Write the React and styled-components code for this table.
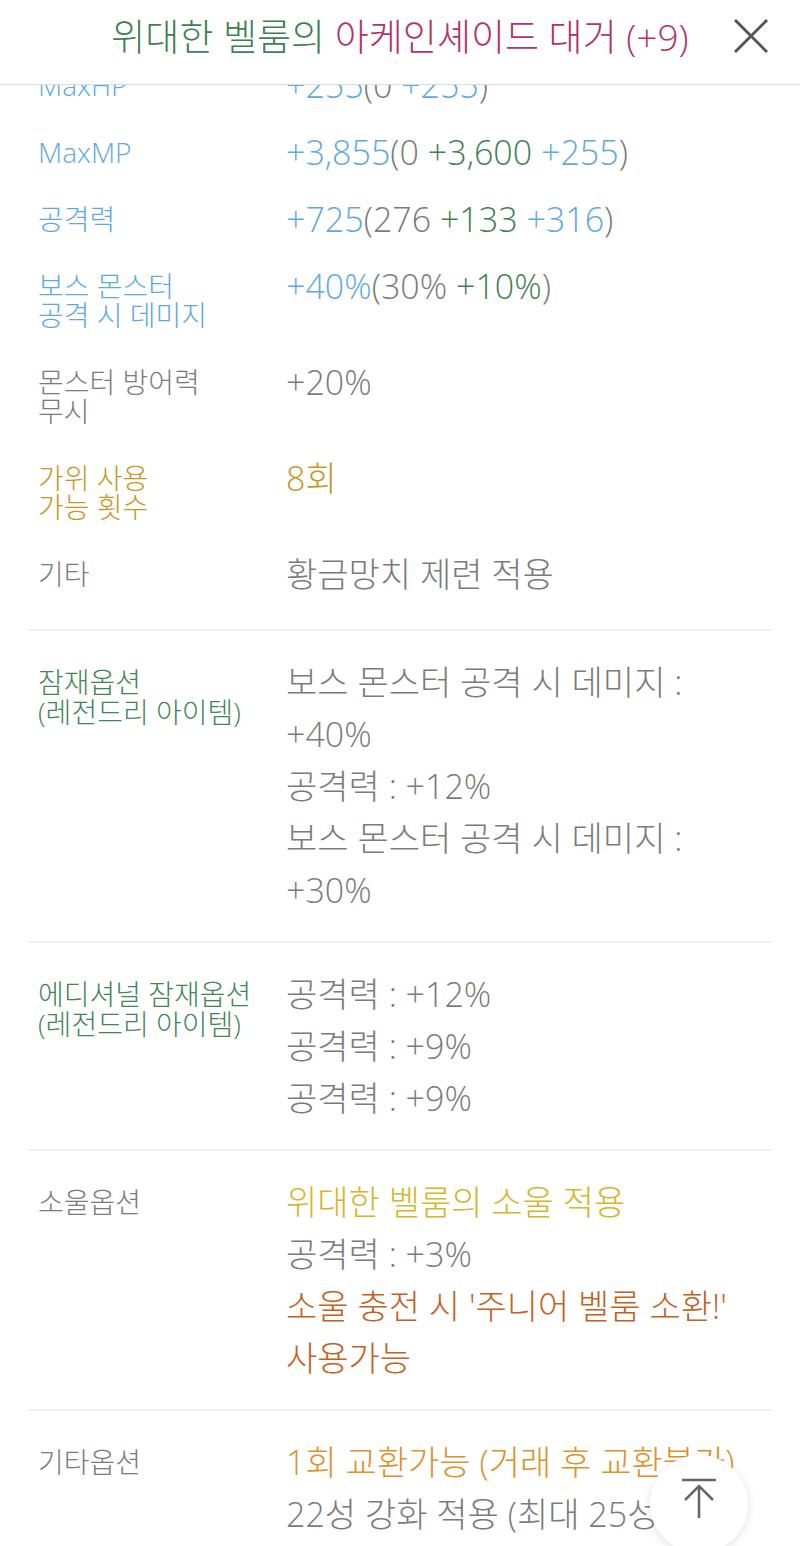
import React, { useLayoutEffect, useRef } from "react";
import styled, { createGlobalStyle } from "styled-components";

const GlobalStyle = createGlobalStyle`
  html, body {
    margin: 0;
    padding: 0;
    background: #fff;
  }
  body {
    font-family: "Open Sans", "Noto Sans CJK KR", sans-serif;
    font-weight: 300;
  }
`;

const colors = {
  blue: "#5eaadf",
  gray: "#7b7b7b",
  green: "#3f7f51",
  label: "#3f8657",
  gold: "#c6981f",
  yellow: "#d6b62b",
  brown: "#c2621f",
  orange: "#df9129",
  pink: "#b4326c",
};

const Page = styled.div`
  height: 100vh;
  display: flex;
  flex-direction: column;
  overflow: hidden;
`;

const Header = styled.header`
  flex: none;
  height: 84px;
  border-bottom: 1px solid #dcdcdc;
  display: grid;
  grid-template-columns: 1fr auto 1fr;
  align-items: center;
  background: #fff;
`;

const Title = styled.h1`
  grid-column: 2;
  margin: 0 0 14px;
  font-size: 37px;
  font-weight: 300;
  color: ${colors.green};
  white-space: nowrap;
`;

const ItemName = styled.span`
  color: ${colors.pink};
`;

const CloseButton = styled.button`
  justify-self: end;
  margin: 0 28px 12px 0;
  padding: 4px;
  border: 0;
  background: none;
  display: flex;
  cursor: pointer;
`;

const Body = styled.div`
  flex: 1;
  overflow-y: auto;
  scrollbar-width: none;
  padding: 0 28px;
`;

const Section = styled.section`
  padding: ${(p) => (p.$stats ? "0 0 21px" : "25px 0")};
  border-bottom: 2px solid #f1f1f1;
`;

const StatRow = styled.div`
  display: grid;
  grid-template-columns: 248px 1fr;
  padding: 19px 0 19px 10px;
  line-height: 29px;
`;

const OptionRow = styled.div`
  display: grid;
  grid-template-columns: 248px 1fr;
  padding-left: 10px;
`;

const Label = styled.div`
  font-size: 28px;
  color: ${(p) => colors[p.$tone] || colors.gray};
  line-height: ${(p) => (p.$option ? "30px" : "29px")};
  padding-top: ${(p) => (p.$option ? "11px" : "0")};
`;

const Value = styled.div`
  font-size: 34px;
  white-space: nowrap;
`;

const Lines = styled.div`
  font-size: 34px;
  line-height: 52px;
  padding-right: 24px;
  word-break: keep-all;
`;

const Line = styled.div`
  color: ${(p) => colors[p.$tone] || colors.gray};
`;

const Tone = styled.span`
  color: ${(p) => colors[p.$tone] || colors.gray};
`;

const TopButton = styled.button`
  position: fixed;
  right: 52px;
  bottom: -7px;
  width: 98px;
  height: 98px;
  border-radius: 50%;
  border: 0;
  background: #fff;
  box-shadow: 0 2px 10px rgba(0, 0, 0, 0.12);
  display: flex;
  align-items: center;
  justify-content: center;
  padding: 0 0 12px;
`;

const stats = [
  {
    label: "MaxHP",
    tone: "blue",
    value: [["+255", "blue"], ["(0 ", "gray"], ["+255", "blue"], [")", "gray"]],
  },
  {
    label: "MaxMP",
    tone: "blue",
    value: [
      ["+3,855", "blue"],
      ["(0 ", "gray"],
      ["+3,600", "green"],
      [" +255", "blue"],
      [")", "gray"],
    ],
  },
  {
    label: "공격력",
    tone: "blue",
    value: [
      ["+725", "blue"],
      ["(276 ", "gray"],
      ["+133", "green"],
      [" +316", "blue"],
      [")", "gray"],
    ],
  },
  {
    label: ["보스 몬스터", "공격 시 데미지"],
    tone: "blue",
    value: [["+40%", "blue"], ["(30% ", "gray"], ["+10%", "green"], [")", "gray"]],
  },
  {
    label: ["몬스터 방어력", "무시"],
    tone: "gray",
    value: [["+20%", "gray"]],
  },
  {
    label: ["가위 사용", "가능 횟수"],
    tone: "gold",
    value: [["8회", "gold"]],
  },
  {
    label: "기타",
    tone: "gray",
    value: [["황금망치 제련 적용", "gray"]],
  },
];

const options = [
  {
    label: ["잠재옵션", "(레전드리 아이템)"],
    tone: "label",
    lines: [
      ["보스 몬스터 공격 시 데미지 : +40%", "gray"],
      ["공격력 : +12%", "gray"],
      ["보스 몬스터 공격 시 데미지 : +30%", "gray"],
    ],
  },
  {
    label: ["에디셔널 잠재옵션", "(레전드리 아이템)"],
    tone: "label",
    lines: [
      ["공격력 : +12%", "gray"],
      ["공격력 : +9%", "gray"],
      ["공격력 : +9%", "gray"],
    ],
  },
  {
    label: ["소울옵션"],
    tone: "gray",
    lines: [
      ["위대한 벨룸의 소울 적용", "yellow"],
      ["공격력 : +3%", "gray"],
      ["소울 충전 시 '주니어 벨룸 소환!' 사용가능", "brown"],
    ],
  },
  {
    label: ["기타옵션"],
    tone: "gray",
    lines: [
      ["1회 교환가능 (거래 후 교환불가)", "orange"],
      ["22성 강화 적용 (최대 25성)", "gray"],
    ],
  },
];

function MultiLine({ text }) {
  const parts = Array.isArray(text) ? text : [text];
  return parts.map((t, i) => (
    <React.Fragment key={i}>
      {i > 0 && <br />}
      {t}
    </React.Fragment>
  ));
}

export default function App() {
  const bodyRef = useRef(null);

  // the list is shown scrolled a little, MaxHP sits under the header
  useLayoutEffect(() => {
    const el = bodyRef.current;
    if (!el) return;
    el.scrollTop = 33;
    const id = requestAnimationFrame(() => {
      el.scrollTop = 33;
    });
    return () => cancelAnimationFrame(id);
  }, []);

  return (
    <Page>
      <GlobalStyle />
      <Header>
        <Title>
          위대한 벨룸의 <ItemName>아케인셰이드 대거 (+9)</ItemName>
        </Title>
        <CloseButton aria-label="닫기">
          <svg width="34" height="34" viewBox="0 0 34 34">
            <path d="M1 1 L33 33 M33 1 L1 33" stroke="#555" strokeWidth="3" fill="none" />
          </svg>
        </CloseButton>
      </Header>

      <Body ref={bodyRef}>
        <Section $stats>
          {stats.map((s, i) => (
            <StatRow key={i}>
              <Label $tone={s.tone}>
                <MultiLine text={s.label} />
              </Label>
              <Value>
                {s.value.map(([t, tone], j) => (
                  <Tone key={j} $tone={tone}>
                    {t}
                  </Tone>
                ))}
              </Value>
            </StatRow>
          ))}
        </Section>

        {options.map((o, i) => (
          <Section key={i}>
            <OptionRow>
              <Label $tone={o.tone} $option>
                <MultiLine text={o.label} />
              </Label>
              <Lines>
                {o.lines.map(([t, tone], j) => (
                  <Line key={j} $tone={tone}>
                    {t}
                  </Line>
                ))}
              </Lines>
            </OptionRow>
          </Section>
        ))}
      </Body>

      <TopButton aria-label="맨 위로">
        <svg width="36" height="40" viewBox="0 0 36 40">
          <path
            d="M1 2 H35 M18 40 V8 M4 22 L18 8 L32 22"
            stroke="#666"
            strokeWidth="2.5"
            fill="none"
          />
        </svg>
      </TopButton>
    </Page>
  );
}
